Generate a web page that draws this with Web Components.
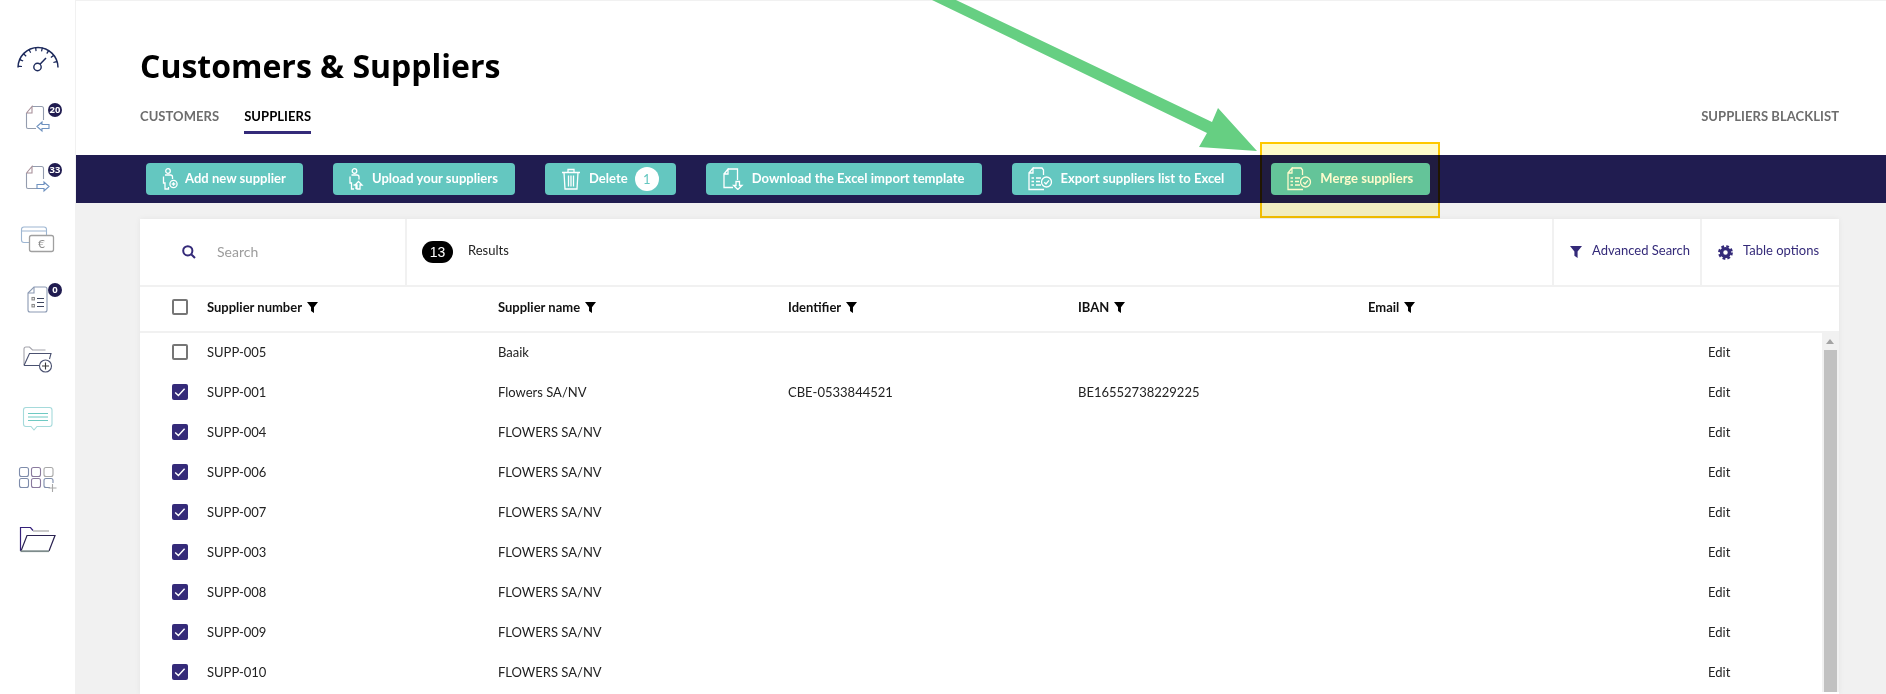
<!DOCTYPE html>
<html lang="en">
<head>
<meta charset="utf-8">
<title>Customers &amp; Suppliers</title>
<style>
  html, body { margin: 0; height: 100%; overflow: hidden; background: #fff; }
  body { font-family: Lato, "Liberation Sans", sans-serif; font-size: 13px; color: #222; }
</style>
</head>
<body>
<app-shell>
  <side-nav slot="nav">
    <nav-item icon="gauge"></nav-item>
    <nav-item icon="docIn" badge="20"></nav-item>
    <nav-item icon="docOut" badge="33"></nav-item>
    <nav-item icon="cards"></nav-item>
    <nav-item icon="listDoc" badge="0"></nav-item>
    <nav-item icon="folderPlus"></nav-item>
    <nav-item icon="chat"></nav-item>
    <nav-item icon="gridPlus"></nav-item>
    <nav-item icon="folderOpen"></nav-item>
  </side-nav>

  <page-header slot="header" title-text="Customers &amp; Suppliers">
    <tab-link>CUSTOMERS</tab-link>
    <tab-link active>SUPPLIERS</tab-link>
    <tab-link slot="aside">SUPPLIERS BLACKLIST</tab-link>
  </page-header>

  <action-bar slot="actions">
    <action-button icon="personAdd">Add new supplier</action-button>
    <action-button icon="personUp">Upload your suppliers</action-button>
    <action-button icon="trash" count="1">Delete</action-button>
    <action-button icon="docDown">Download the Excel import template</action-button>
    <action-button icon="docCheck">Export suppliers list to Excel</action-button>
    <action-button icon="docCheck">Merge suppliers</action-button>
  </action-bar>

  <data-card slot="content" total="13">
    <supplier-row number="SUPP-005" name="Baaik"></supplier-row>
    <supplier-row checked number="SUPP-001" name="Flowers SA/NV" identifier="CBE-0533844521" iban="BE16552738229225"></supplier-row>
    <supplier-row checked number="SUPP-004" name="FLOWERS SA/NV"></supplier-row>
    <supplier-row checked number="SUPP-006" name="FLOWERS SA/NV"></supplier-row>
    <supplier-row checked number="SUPP-007" name="FLOWERS SA/NV"></supplier-row>
    <supplier-row checked number="SUPP-003" name="FLOWERS SA/NV"></supplier-row>
    <supplier-row checked number="SUPP-008" name="FLOWERS SA/NV"></supplier-row>
    <supplier-row checked number="SUPP-009" name="FLOWERS SA/NV"></supplier-row>
    <supplier-row checked number="SUPP-010" name="FLOWERS SA/NV"></supplier-row>
  </data-card>
</app-shell>
<screen-annotation></screen-annotation>

<script>
const FUNNEL = `<path d="M0 0H12L7.6 5.6V12L4.4 9.8V5.6Z" fill="currentColor"/>`;

const NAV_ICONS = {
  gauge: `<g fill="none" stroke="#1d2a5c">
      <path d="M18 37.5A20 20 0 0 1 58 37.5" stroke-width="1.5"/>
      <path d="M20 37A18 18 0 0 1 56 37" stroke-width="4" stroke-dasharray="1.3 5"/>
      <circle cx="37.5" cy="37" r="3.7" stroke-width="1.4"/>
      <path d="M40 34.2L46 28" stroke-width="1.5"/></g>`,
  docIn: `<g fill="none" stroke-width="1.1"><path d="M32 16.5H41.5Q43.5 16.5 43.5 18.5V30M26.5 23V37Q26.5 38.5 28 38.5H36" stroke="#939cae"/>
      <path d="M26.5 23L32 16.5V23H26.5" stroke="#a8909a"/>
      <path d="M37 36.5L42 32V34.5H49V38.5H42V41Z" stroke="#6f92c0"/></g>`,
  docOut: `<g fill="none" stroke-width="1.1"><path d="M32 16.5H41.5Q43.5 16.5 43.5 18.5V29M26.5 23V37Q26.5 38.5 28 38.5H37" stroke="#939cae"/>
      <path d="M26.5 23L32 16.5V23H26.5" stroke="#a8909a"/>
      <path d="M49 36.5L44 32V34.5H37V38.5H44V41Z" stroke="#6f92c0"/></g>`,
  cards: `<g fill="none" stroke-width="1.1"><path d="M29 32.5H24Q21.5 32.5 21.5 30V19.5Q21.5 17 24 17H44Q46.5 17 46.5 19.5V25.5M21.5 21H46.5" stroke="#9db6d2"/>
      <rect x="29.5" y="25.5" width="24" height="16" rx="2" stroke="#a0a0a0" stroke-width="1.3"/></g>
      <text x="41.5" y="38" text-anchor="middle" font-family="Lato, sans-serif" font-size="12" fill="#8d8d8d">€</text>`,
  listDoc: `<g fill="none" stroke-width="1.1"><path d="M34 17H45Q47 17 47 19V40Q47 42 45 42H30Q28 42 28 40V23Z" stroke="#8b9ab3"/>
      <path d="M28 23H34V17" stroke="#8b9ab3"/>
      <path d="M37 28.5H44M37 32.5H44M37 36.5H44" stroke="#3d4560"/>
      <rect x="32" y="27.5" width="2.4" height="2.4" stroke="#8b8b8b"/><rect x="32" y="34.5" width="2.4" height="2.4" stroke="#8b8b8b"/></g>`,
  folderPlus: `<g fill="none" stroke-width="1.1"><path d="M24 35V19Q24 17 26 17H29.5L32.5 20H45.5" stroke="#a3a3ab"/>
      <path d="M24 35.5L29.5 23.5H51L49.5 29M24 35.5H39" stroke="#4a5170"/>
      <circle cx="45.5" cy="36" r="6" stroke="#4a5170"/><path d="M45.5 32.5V39.5M42 36H49" stroke="#3a3a3a"/></g>`,
  chat: `<path d="M26 17.5H49.5Q52 17.5 52 20V34Q52 36.5 49.5 36.5H37L34 40L31 36.5H26Q23.5 36.5 23.5 34V20Q23.5 17.5 26 17.5Z" fill="none" stroke="#a5dadb" stroke-width="1.1"/>
      <path d="M28 23.5H48M28 27H48M28 30.5H48" stroke="#6fcac3" stroke-width="1"/>`,
  gridPlus: `<g fill="none" stroke="#7e8cab" stroke-width="1.1">
      <rect x="19.5" y="17.5" width="9" height="9" rx="2"/><rect x="31.5" y="17.5" width="9" height="9" rx="2" stroke="#8a7a9e"/><rect x="44" y="17.5" width="9" height="9" rx="2" stroke="#a8a8a8"/>
      <rect x="19.5" y="28.5" width="9" height="9" rx="2"/><rect x="31.5" y="28.5" width="9" height="9" rx="2" stroke="#8a7a9e"/><path d="M50 37.5H46Q44 37.5 44 35.5V30.5Q44 28.5 46 28.5H51Q53 28.5 53 30.5V33"/>
      <path d="M52.5 34V42M48.5 38H56.5" stroke="#a8a8a8"/></g>`,
  folderOpen: `<g fill="none"><path d="M20.5 41V17.5H30.5L33 20.5" stroke="#35207a" stroke-width="1.2"/><path d="M33 21H49" stroke="#a5a5a5" stroke-width="1.2"/>
      <path d="M21 41L27 25.5H55L49 41" stroke="#2a2250" stroke-width="1.2"/><path d="M20.5 41.2H49" stroke="#7d8b8b" stroke-width="1.8"/></g>`
};

const BUTTON_ICONS = {
  personAdd: { w: 16, h: 22, svg: `<circle cx="6" cy="3" r="2.3"/><path d="M3 7H8.5Q10.5 7 10.5 9V11M1.5 8.5V15H3V21H6.5V19"/><circle cx="11.5" cy="16" r="3.6"/><path d="M11.5 14.2V17.8M9.7 16H13.3"/>` },
  personUp: { w: 16, h: 22, svg: `<circle cx="5.5" cy="3" r="2.3"/><path d="M2.5 7H8Q10 7 10 9V11.5M1 8.5V15H2.5V21H5M7 21V17L4.5 17M9.5 13.5L13 17H11V21H8V17H6Z"/>` },
  trash: { w: 21, h: 22, svg: `<path d="M1 4.5H19M7 4.5V1.5H13V4.5M3 4.5L4 21H16L17 4.5M7.5 7.5V18.5M10 7.5V18.5M12.5 7.5V18.5"/>` },
  docDown: { w: 23, h: 22, svg: `<path d="M6 1H15.5V12M2 6L6 1V6H2V19.5H11"/><path d="M14 13.5H17.5V17.5H20L15.8 21.5L11.6 17.5H14Z"/>` },
  docCheck: { w: 26, h: 24, svg: `<path d="M5 1H14L15.5 3V8M1 6L5 1V6H1V22.5H16"/><path d="M3.5 11H6M3.5 14.5H6M3.5 18H6M8 11H13M8 14.5H12M8 18H13"/><circle cx="18.5" cy="15" r="5"/><path d="M16.3 15.2L18 17L21 13.3"/>` }
};

class AppShell extends HTMLElement {
  constructor() {
    super();
    this.attachShadow({ mode: "open" });
    this.shadowRoot.innerHTML = `
      <style>
        :host { display: grid; grid-template-columns: 76px 1fr; height: 100vh; overflow: hidden; }
        .main { display: flex; flex-direction: column; min-width: 0; min-height: 0; background: #f1f1f1; }
      </style>
      <slot name="nav"></slot>
      <div class="main">
        <slot name="header"></slot>
        <slot name="actions"></slot>
        <slot name="content"></slot>
      </div>`;
  }
}

class SideNav extends HTMLElement {
  constructor() {
    super();
    this.attachShadow({ mode: "open" });
    this.shadowRoot.innerHTML = `
      <style>
        :host { display: flex; flex-direction: column; padding-top: 30px; background: #fff; border-right: 1px solid #f1f1f1; }
      </style>
      <slot></slot>`;
  }
}

class NavItem extends HTMLElement {
  connectedCallback() {
    const badge = this.getAttribute("badge");
    this.attachShadow({ mode: "open" });
    this.shadowRoot.innerHTML = `
      <style>
        :host { display: block; position: relative; width: 75px; height: 60px; flex: none; }
        svg { display: block; }
        .badge {
          position: absolute; left: 48px; top: 13px; width: 14px; height: 14px; border-radius: 50%;
          background: #201c50; color: #fff; font: 700 9.5px/14px "Open Sans", sans-serif; text-align: center;
        }
      </style>
      <svg width="75" height="60" viewBox="0 0 75 60">${NAV_ICONS[this.getAttribute("icon")]}</svg>
      ${badge === null ? "" : `<span class="badge">${badge}</span>`}`;
  }
}

class PageHeader extends HTMLElement {
  connectedCallback() {
    this.attachShadow({ mode: "open" });
    this.shadowRoot.innerHTML = `
      <style>
        :host { display: block; height: 154px; flex: none; padding: 0 47px 0 64px; background: #fff; border-top: 1px solid #f1f1f1; }
        h1 { margin: 0; padding-top: 43px; font: 700 32px/44px "Open Sans", sans-serif; color: #000; }
        .tabs { display: flex; align-items: flex-start; gap: 25px; margin-top: 20px; }
        .spacer { flex: 1; }
      </style>
      <h1>${this.getAttribute("title-text").replace("&", "&amp;")}</h1>
      <div class="tabs"><slot></slot><span class="spacer"></span><slot name="aside"></slot></div>`;
  }
}

class TabLink extends HTMLElement {
  constructor() {
    super();
    this.attachShadow({ mode: "open" });
    this.shadowRoot.innerHTML = `
      <style>
        :host { display: block; padding-bottom: 7px; font: 700 13px/16px Lato, sans-serif; letter-spacing: .06px; color: #6d6d6d; border-bottom: 3px solid transparent; }
        :host([active]) { color: #000; border-bottom-color: #342a79; }
      </style>
      <slot></slot>`;
  }
}

class ActionBar extends HTMLElement {
  constructor() {
    super();
    this.attachShadow({ mode: "open" });
    this.shadowRoot.innerHTML = `
      <style>
        :host { display: flex; align-items: center; gap: 30px; flex: none; height: 48px; padding-left: 70px; background: #201c50; }
      </style>
      <slot></slot>`;
  }
}

class ActionButton extends HTMLElement {
  connectedCallback() {
    const icon = BUTTON_ICONS[this.getAttribute("icon")];
    const count = this.getAttribute("count");
    this.attachShadow({ mode: "open" });
    this.shadowRoot.innerHTML = `
      <style>
        :host {
          display: flex; align-items: center; gap: 7px; height: 32px; padding: 0 17px 0 16px;
          background: #64c7c0; border-radius: 4px; color: #fff; font: 700 13px/16px Lato, sans-serif; letter-spacing: .03px; white-space: nowrap;
        }
        svg { flex: none; fill: none; stroke: currentColor; stroke-width: 1.3; }
        .label { position: relative; top: -1px; }
        .count {
          width: 24px; height: 24px; border-radius: 50%; background: #fff; color: #64c7c0;
          font: 400 13px/24px Lato, sans-serif; text-align: center;
        }
      </style>
      <svg width="${icon.w}" height="${icon.h}" viewBox="0 0 ${icon.w} ${icon.h}">${icon.svg}</svg>
      <span class="label"><slot></slot></span>
      ${count === null ? "" : `<span class="count">${count}</span>`}`;
  }
}

class DataCard extends HTMLElement {
  connectedCallback() {
    this.attachShadow({ mode: "open" });
    this.shadowRoot.innerHTML = `
      <style>
        :host {
          display: block; flex: 1; min-height: 0; margin: 16px 47px 0 64px; background: #fff;
          box-shadow: 0 0 6px rgba(0,0,0,.06); overflow: hidden;
        }
        .toolbar { display: flex; height: 66px; border-bottom: 2px solid #f1f1f1; }
        .cell { display: flex; align-items: center; border-right: 2px solid #f1f1f1; color: #342a79; }
        .cell:last-child { border-right: 0; }
        .search { width: 223px; padding-left: 42px; gap: 21px; font-size: 14px; color: #9c9c9c; }
        .search svg { color: #342a79; }
        .search em { font-style: normal; position: relative; top: -1px; }
        .results { flex: 1; padding-left: 15px; gap: 15px; color: #222; }
        .results b {
          width: 31px; height: 22px; border-radius: 11px; background: #000; color: #fff; text-align: center;
          font: 400 14px/22px "Liberation Sans", sans-serif;
        }
        .results span, .tool span { position: relative; top: -2px; }
        .tool { padding-left: 16px; gap: 10px; }
        .advanced { width: 130px; }
        .options { width: 121px; padding-left: 16px; gap: 10px; }
        .head { height: 44px; border-bottom: 2px solid #f1f1f1; }
        .head-row { display: grid; grid-template-columns: 67px 291px 290px 290px 290px 1fr; height: 40px; align-items: center; font-weight: 700; color: #111; }
        .head-row > div { display: flex; align-items: center; gap: 5px; }
        .head-row check-box { margin-left: 32px; }
        .filter { width: 11px; height: 11px; color: #000; }
        .rows { position: relative; margin-top: -1px; }
        .scroll { position: absolute; right: 0; top: 1px; bottom: 0; width: 17px; background: #f1f1f1; }
        .scroll i { position: absolute; left: 2px; right: 2px; top: 17px; bottom: 0; background: #c1c1c1; }
        .scroll u { position: absolute; left: 4px; top: 6px; border: 4px solid transparent; border-top: 0; border-bottom: 5px solid #a3a3a3; }
      </style>
      <div class="toolbar">
        <div class="cell search">
          <svg width="14" height="14" viewBox="0 0 14 14" fill="none" stroke="currentColor" stroke-width="2"><circle cx="5.8" cy="5.8" r="4.6"/><path d="M9.2 9.2L13 13"/></svg>
          <em>Search</em>
        </div>
        <div class="cell results"><b>${this.getAttribute("total")}</b><span>Results</span></div>
        <div class="cell tool advanced">
          <svg width="12" height="12" viewBox="0 0 12 12">${FUNNEL}</svg><span>Advanced Search</span>
        </div>
        <div class="cell tool options">
          <svg width="15" height="15" viewBox="0 0 16 16" fill="none" stroke="currentColor"><circle cx="8" cy="8" r="4.2" stroke-width="3.6"/><circle cx="8" cy="8" r="6.6" stroke-width="2.6" stroke-dasharray="2.9 2.28"/></svg><span>Table options</span>
        </div>
      </div>
      <div class="head">
        <div class="head-row">
          <check-box></check-box>
          ${["Supplier number", "Supplier name", "Identifier", "IBAN", "Email"].map((label) => `
            <div>${label}<svg class="filter" viewBox="0 0 12 12">${FUNNEL}</svg></div>`).join("")}
        </div>
      </div>
      <div class="rows">
        <slot></slot>
        <div class="scroll"><u></u><i></i></div>
      </div>`;
  }
}

class CheckBox extends HTMLElement {
  constructor() {
    super();
    this.attachShadow({ mode: "open" });
    this.shadowRoot.innerHTML = `
      <style>
        :host { display: block; box-sizing: border-box; width: 16px; height: 16px; border: 2px solid #767676; border-radius: 2px; background: #fff; }
        :host([checked]) { border: 0; background: #342a79; }
        svg { display: none; }
        :host([checked]) svg { display: block; }
      </style>
      <svg width="16" height="16" viewBox="0 0 16 16" fill="none" stroke="#fff" stroke-width="1.4"><path d="M3.2 8.4L6.4 11.4L12.6 4.8"/></svg>`;
  }
}

class SupplierRow extends HTMLElement {
  connectedCallback() {
    const get = (name) => this.getAttribute(name) || "";
    this.attachShadow({ mode: "open" });
    this.shadowRoot.innerHTML = `
      <style>
        :host { display: grid; grid-template-columns: 67px 291px 290px 290px 290px 340px 1fr; height: 40px; align-items: center; }
        check-box { margin-left: 32px; }
      </style>
      <check-box ${this.hasAttribute("checked") ? "checked" : ""}></check-box>
      <div>${get("number")}</div><div>${get("name")}</div><div>${get("identifier")}</div><div>${get("iban")}</div><div></div>
      <div>Edit</div>`;
  }
}

class ScreenAnnotation extends HTMLElement {
  constructor() {
    super();
    this.attachShadow({ mode: "open" });
    this.shadowRoot.innerHTML = `
      <style>
        :host { display: block; }
        .mark {
          position: absolute; left: 1260px; top: 142px; width: 180px; height: 76px; box-sizing: border-box;
          border: 2px solid #ffc800; background: #fffbcc; mix-blend-mode: multiply;
        }
        svg { position: absolute; left: 0; top: 0; }
      </style>
      <div class="mark"></div>
      <svg width="1886" height="694" viewBox="0 0 1886 694"><polygon fill="#66cf82" points="932,0 956,0 1212,122 1218,108 1257,151 1199,147 1207,133"/></svg>`;
  }
}

customElements.define("app-shell", AppShell);
customElements.define("side-nav", SideNav);
customElements.define("nav-item", NavItem);
customElements.define("page-header", PageHeader);
customElements.define("tab-link", TabLink);
customElements.define("action-bar", ActionBar);
customElements.define("action-button", ActionButton);
customElements.define("check-box", CheckBox);
customElements.define("data-card", DataCard);
customElements.define("supplier-row", SupplierRow);
customElements.define("screen-annotation", ScreenAnnotation);
</script>
</body>
</html>
